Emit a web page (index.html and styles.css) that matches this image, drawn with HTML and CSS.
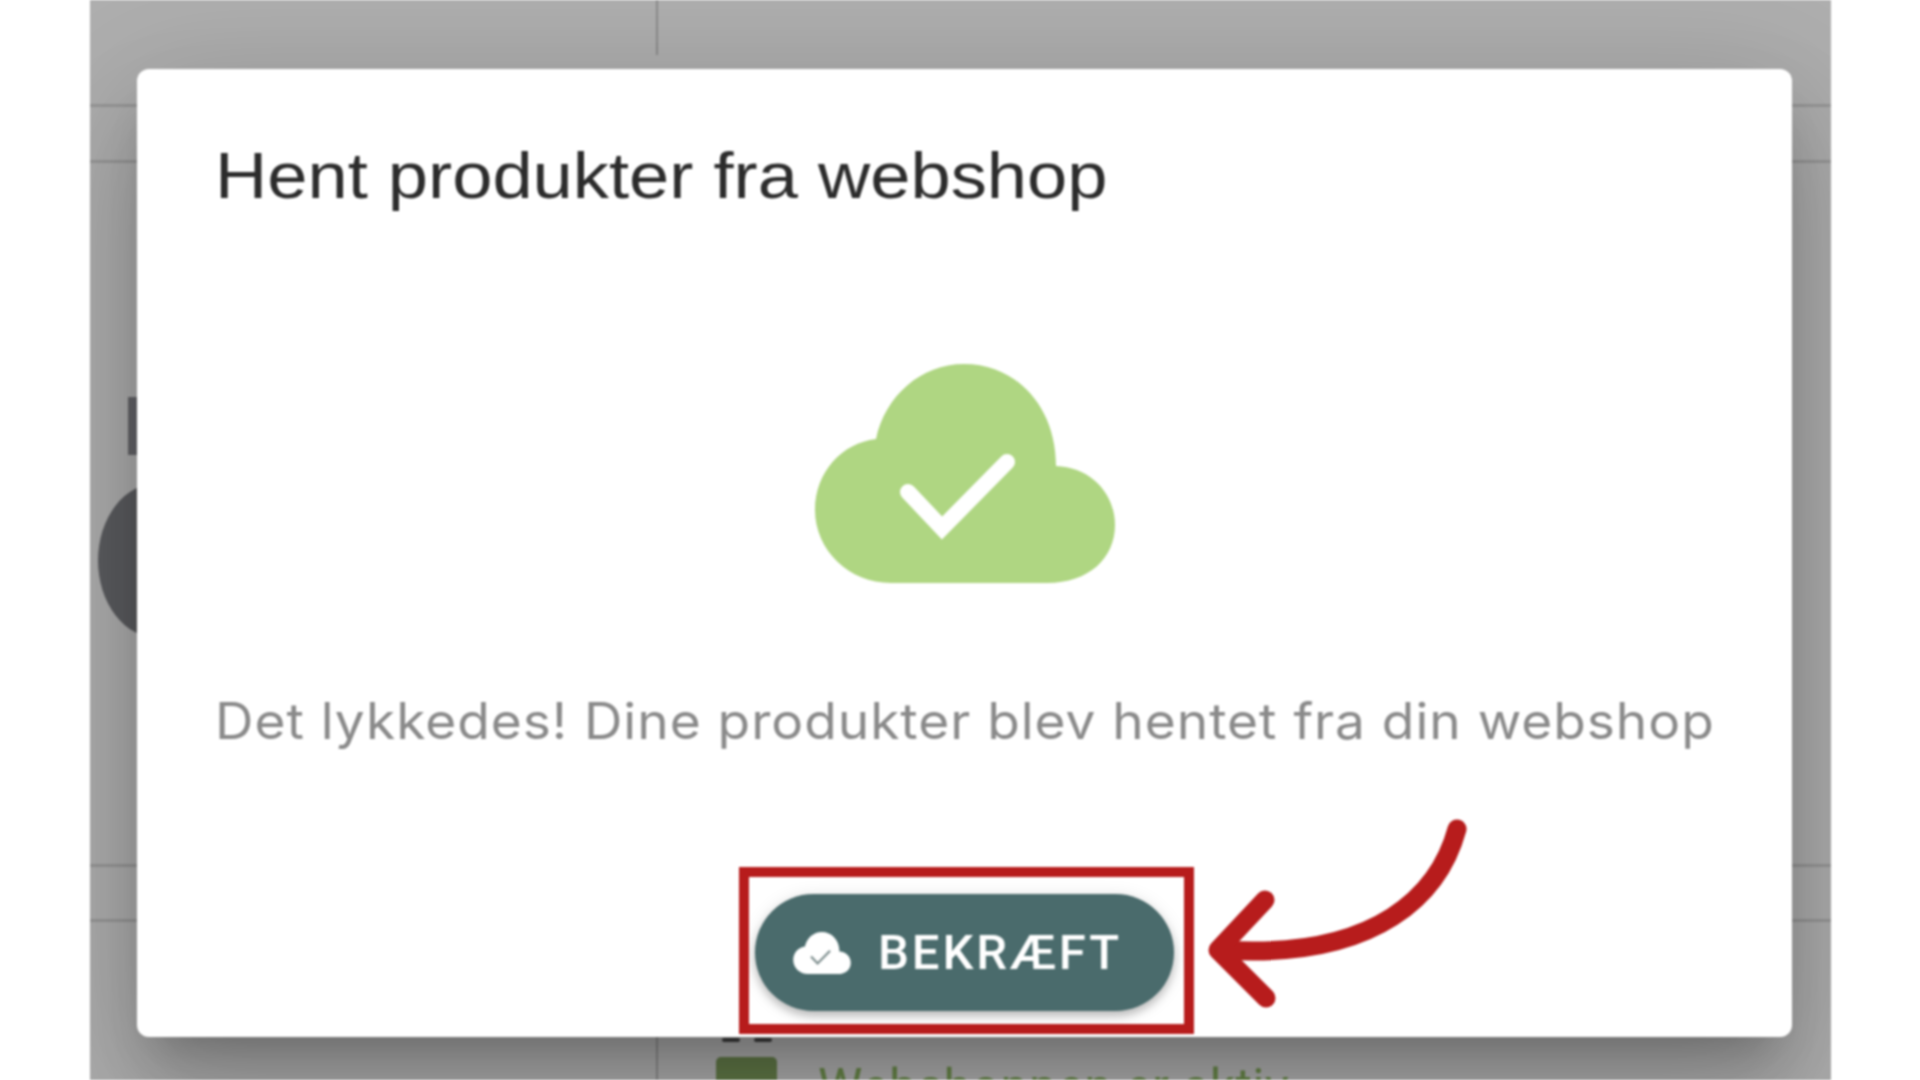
FILE: index.html
```html
<!DOCTYPE html>
<html lang="da">
<head>
<meta charset="utf-8">
<title>Hent produkter fra webshop</title>
<link rel="stylesheet" href="styles.css">
</head>
<body>
<div class="page">
  <div class="panel">
    <div class="under">
      <div class="row row-top"><span class="vline vline-top"></span></div>
      <div class="row row-sub"></div>
      <div class="row row-main">
        <span class="stub"></span>
        <span class="blob"></span>
      </div>
      <div class="row row-mid"></div>
      <div class="row-bottom">
        <span class="vline vline-bottom"></span>
        <div class="status">
          <div class="dashes"><i></i><i></i></div>
          <div class="status-line">
            <span class="status-box"></span>
            <span class="status-text">Webshoppen er aktiv</span>
          </div>
        </div>
      </div>
    </div>
    <section class="modal">
      <h1 class="modal-title">Hent produkter fra webshop</h1>
      <svg class="cloud" viewBox="0 0 300 219" aria-hidden="true">
        <path class="cloud-fill" d="M61 75C70 32 106 0 149 0C200 0 241 41 241 102C275 103 300 129 300 161C300 194 274 219 232 219L76 219C34 219 0 186 0 146C0 108 27 79 61 75Z"/>
        <path class="cloud-check" d="M93 128L127 164L192 98"/>
      </svg>
      <p class="modal-text">Det lykkedes! Dine produkter blev hentet fra din webshop</p>
      <button class="confirm" type="button">
        <svg class="confirm-icon" viewBox="0 0 300 219" aria-hidden="true">
          <path class="confirm-fill" d="M61 75C70 32 106 0 149 0C200 0 241 41 241 102C275 103 300 129 300 161C300 194 274 219 232 219L76 219C34 219 0 186 0 146C0 108 27 79 61 75Z"/>
          <path class="confirm-check" d="M93 128L127 164L192 98"/>
        </svg>
        <span class="confirm-label">BEKRÆFT</span>
      </button>
    </section>
  </div>
  <div class="highlight"></div>
  <svg class="arrow" viewBox="0 0 1920 1080" aria-hidden="true">
    <path d="M1457 829C1440 892 1380 960 1222 950"/>
    <path d="M1265 900L1218 950L1266 998"/>
  </svg>
</div>
</body>
</html>
```

FILE: styles.css
```css
* { box-sizing: border-box; }
html, body { margin: 0; height: 100%; background: #fff; }
body { overflow: hidden; }

.page { position: relative; width: 1920px; height: 1080px; filter: blur(0.9px); }

.panel {
  position: relative;
  width: 1741px;
  height: 1080px;
  margin-left: 90px;
  overflow: hidden;
  background: #afafaf;
}

.under { display: flex; flex-direction: column; height: 100%; }
.row { border-bottom: 3px solid rgba(0,0,0,.13); flex: none; }
.row-top { height: 107px; }
.row-sub { height: 56px; }
.row-main { height: 704px; display: flex; flex-direction: column; align-items: flex-start; }
.row-mid { height: 55px; }
.row-bottom { flex: 1; display: flex; }
.vline { display: block; width: 2px; background: rgba(0,0,0,.2); }
.vline-top { height: 55px; margin-left: 566px; }
.vline-bottom { height: 100%; margin-left: 566px; }

.stub { width: 60px; height: 58px; margin: 234px 0 0 38px; background: #66666a; }
.blob { width: 200px; height: 155px; margin: 28px 0 0 8px; border-radius: 60px / 78px; background: #5c5d60; }

.status { margin: 116px 0 0 58px; }
.dashes { display: flex; gap: 14px; margin: 0 0 15px 6px; }
.dashes i { width: 18px; height: 4px; border-radius: 2px; background: #3f3f3f; }
.status-line { display: flex; align-items: flex-start; gap: 41px; }
.status-box { width: 61px; height: 60px; border-radius: 5px; background: #627a48; }
.status-text { font: 400 50px/60px Roboto, sans-serif; letter-spacing: 0.4px; color: #688749; margin-top: 0; }

.modal {
  position: absolute;
  left: 47px;
  top: 69px;
  width: 1655px;
  height: 968px;
  padding: 64px 78px 0;
  display: flex;
  flex-direction: column;
  border-radius: 12px;
  background: #fff;
  box-shadow: 0 30px 42px -20px rgba(0,0,0,.22), 0 66px 106px 8px rgba(0,0,0,.15), 0 25px 130px 22px rgba(0,0,0,.12);
}
.modal-title {
  margin: 0;
  font: 400 64px/86px "Liberation Sans", sans-serif;
  color: #2c2c2c;
  white-space: nowrap;
  transform: scaleX(1.13);
  transform-origin: left center;
}
.cloud { display: block; width: 300px; height: 219px; margin: 145px auto 0; flex: none; }
.cloud-fill { fill: #afd682; }
.cloud-check { fill: none; stroke: #fff; stroke-width: 16; stroke-linecap: round; stroke-linejoin: miter; }

.modal-text {
  margin: 108px 0 0;
  font: 400 50px/60px Inter, sans-serif;
  letter-spacing: 0.9px;
  color: #8a8a8a;
  white-space: nowrap;
  transform: scaleX(1.065);
  transform-origin: left center;
}

.confirm {
  align-self: center;
  display: flex;
  align-items: center;
  width: 419px;
  height: 117px;
  margin-top: 143px;
  padding: 0 0 0 38px;
  gap: 27px;
  border: 0;
  border-radius: 59px;
  background: #4a6b6c;
  color: #fff;
  font: 500 49px/1 Roboto, sans-serif;
  letter-spacing: 2.9px;
  box-shadow: 0 5px 9px rgba(0,0,0,.22), 0 2px 18px rgba(0,0,0,.1);
}
.confirm-icon { width: 58px; height: 42px; flex: none; }
.confirm-fill { fill: #fff; }
.confirm-check { fill: none; stroke: #7f8f8f; stroke-width: 12; }
.confirm-label { font-weight: 500; }

.highlight {
  position: absolute;
  left: 739px;
  top: 867px;
  width: 455px;
  height: 167px;
  border: 10px solid #b71c1c;
}
.arrow { position: absolute; inset: 0; width: 1920px; height: 1080px; pointer-events: none; }
.arrow path { fill: none; stroke: #b71c1c; stroke-width: 19; stroke-linecap: round; stroke-linejoin: round; }
```
